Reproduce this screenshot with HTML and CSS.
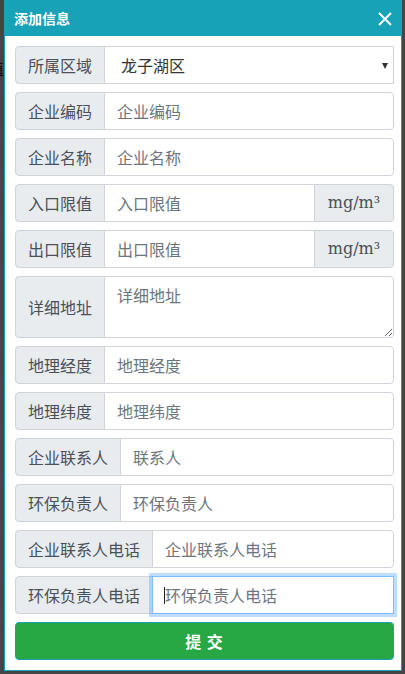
FILE: index.html
```html
<!DOCTYPE html>
<html lang="zh">
<head>
<meta charset="utf-8">
<title>添加信息</title>
<link rel="stylesheet" href="styles.css">
</head>
<body>
<div class="backdrop-text">值</div>
<div class="dialog">
  <div class="dialog-head">
    <span class="dialog-title">添加信息</span>
    <svg class="close" width="14" height="14" viewBox="0 0 14 14"><path d="M1 1 L13 13 M13 1 L1 13" stroke="#fff" stroke-width="2" fill="none"/></svg>
  </div>
  <form class="dialog-body">
    <div class="group">
      <span class="addon">所属区域</span>
      <div class="select-wrap">
        <select class="field select"><option>龙子湖区</option></select>
        <span class="caret-down"></span>
      </div>
    </div>
    <div class="group">
      <span class="addon">企业编码</span>
      <input class="field" placeholder="企业编码">
    </div>
    <div class="group">
      <span class="addon">企业名称</span>
      <input class="field" placeholder="企业名称">
    </div>
    <div class="group">
      <span class="addon">入口限值</span>
      <input class="field" placeholder="入口限值">
      <span class="addon unit">mg/m³</span>
    </div>
    <div class="group">
      <span class="addon">出口限值</span>
      <input class="field" placeholder="出口限值">
      <span class="addon unit">mg/m³</span>
    </div>
    <div class="group">
      <span class="addon">详细地址</span>
      <textarea class="field area" rows="2" placeholder="详细地址"></textarea>
    </div>
    <div class="group">
      <span class="addon">地理经度</span>
      <input class="field" placeholder="地理经度">
    </div>
    <div class="group">
      <span class="addon">地理纬度</span>
      <input class="field" placeholder="地理纬度">
    </div>
    <div class="group">
      <span class="addon">企业联系人</span>
      <input class="field" placeholder="联系人">
    </div>
    <div class="group">
      <span class="addon">环保负责人</span>
      <input class="field" placeholder="环保负责人">
    </div>
    <div class="group">
      <span class="addon">企业联系人电话</span>
      <input class="field" placeholder="企业联系人电话">
    </div>
    <div class="group">
      <span class="addon">环保负责人电话</span>
      <div class="focus-wrap">
        <input class="field focused" placeholder="环保负责人电话">
        <span class="text-caret"></span>
      </div>
    </div>
    <button type="button" class="submit">提 交</button>
  </form>
</div>
</body>
</html>
```

FILE: styles.css
```css
html, body {
  margin: 0;
  padding: 0;
}
body {
  background: #454545;
  font-family: "Noto Sans CJK SC", "Noto Sans", sans-serif;
  height: 674px;
  overflow: hidden;
  position: relative;
}
.backdrop-text {
  position: absolute;
  left: -12px;
  top: 58px;
  font-size: 16px;
  line-height: 20px;
  color: #111;
}
.dialog {
  position: relative;
  margin-left: 4px;
  width: 396px;
  background: #fff;
  border: 1px solid #17a2b8;
  border-top: none;
}
.dialog-head {
  height: 36px;
  background: #17a2b8;
  display: flex;
  align-items: center;
  justify-content: space-between;
  padding: 0 9px 0 9px;
}
.dialog-title {
  color: #fff;
  font-size: 14px;
  font-weight: bold;
  line-height: 20px;
  margin-top: -1px;
}
.close {
  display: block;
  margin-top: 1px;
}
.dialog-body {
  padding: 10px 7px 10px 10px;
  margin: 0;
}
.group {
  display: flex;
  align-items: stretch;
  margin-bottom: 8px;
}
.addon {
  display: flex;
  align-items: center;
  padding: 6px 12px;
  font-size: 16px;
  line-height: 24px;
  color: #495057;
  background: #e9ecef;
  border: 1px solid #ced4da;
  border-radius: 4px 0 0 4px;
  white-space: nowrap;
  margin-right: -1px;
  position: relative;
  z-index: 1;
}
.addon.unit {
  margin-right: 0;
  margin-left: -1px;
  border-radius: 0 4px 4px 0;
  font-family: "DejaVu Serif", serif;
  font-size: 16px;
  padding: 6px 12px;
  width: 54px;
  justify-content: center;
  overflow: visible;
}
.field {
  flex: 1;
  min-width: 0;
  height: 38px;
  box-sizing: border-box;
  padding: 6px 12px;
  font-family: "Noto Sans CJK SC", "Noto Sans", sans-serif;
  font-size: 16px;
  line-height: 24px;
  color: #495057;
  background: #fff;
  border: 1px solid #ced4da;
  border-radius: 0 4px 4px 0;
  outline: none;
  margin: 0;
}
.group .field:not(:last-child) {
  border-radius: 0;
}
.field::placeholder {
  color: #6c757d;
  opacity: 1;
}
.area {
  height: 62px;
  resize: vertical;
  display: block;
}
.select-wrap {
  flex: 1;
  display: flex;
  position: relative;
}
.select {
  -webkit-appearance: none;
  appearance: none;
  padding-left: 16px;
  color: #333;
}
.caret-down {
  position: absolute;
  right: 6px;
  top: 17px;
  width: 0;
  height: 0;
  border-left: 3.5px solid transparent;
  border-right: 3.5px solid transparent;
  border-top: 6px solid #333;
}
.focus-wrap {
  flex: 1;
  display: flex;
  position: relative;
  z-index: 3;
}
.focused {
  border-color: #80bdff;
  box-shadow: 0 0 0 3px rgba(0, 123, 255, 0.25);
}
.text-caret {
  position: absolute;
  left: 12px;
  top: 11px;
  width: 1px;
  height: 17px;
  background: #222;
}
.submit {
  display: block;
  width: 100%;
  height: 38px;
  margin: 0;
  padding: 0;
  border: 1px solid #1a9fb3;
  border-radius: 4px;
  background: #28a745;
  color: #fff;
  font-family: "Noto Sans CJK SC", "Noto Sans", sans-serif;
  font-size: 16px;
  font-weight: bold;
  line-height: 24px;
  letter-spacing: 1px;
}
```
